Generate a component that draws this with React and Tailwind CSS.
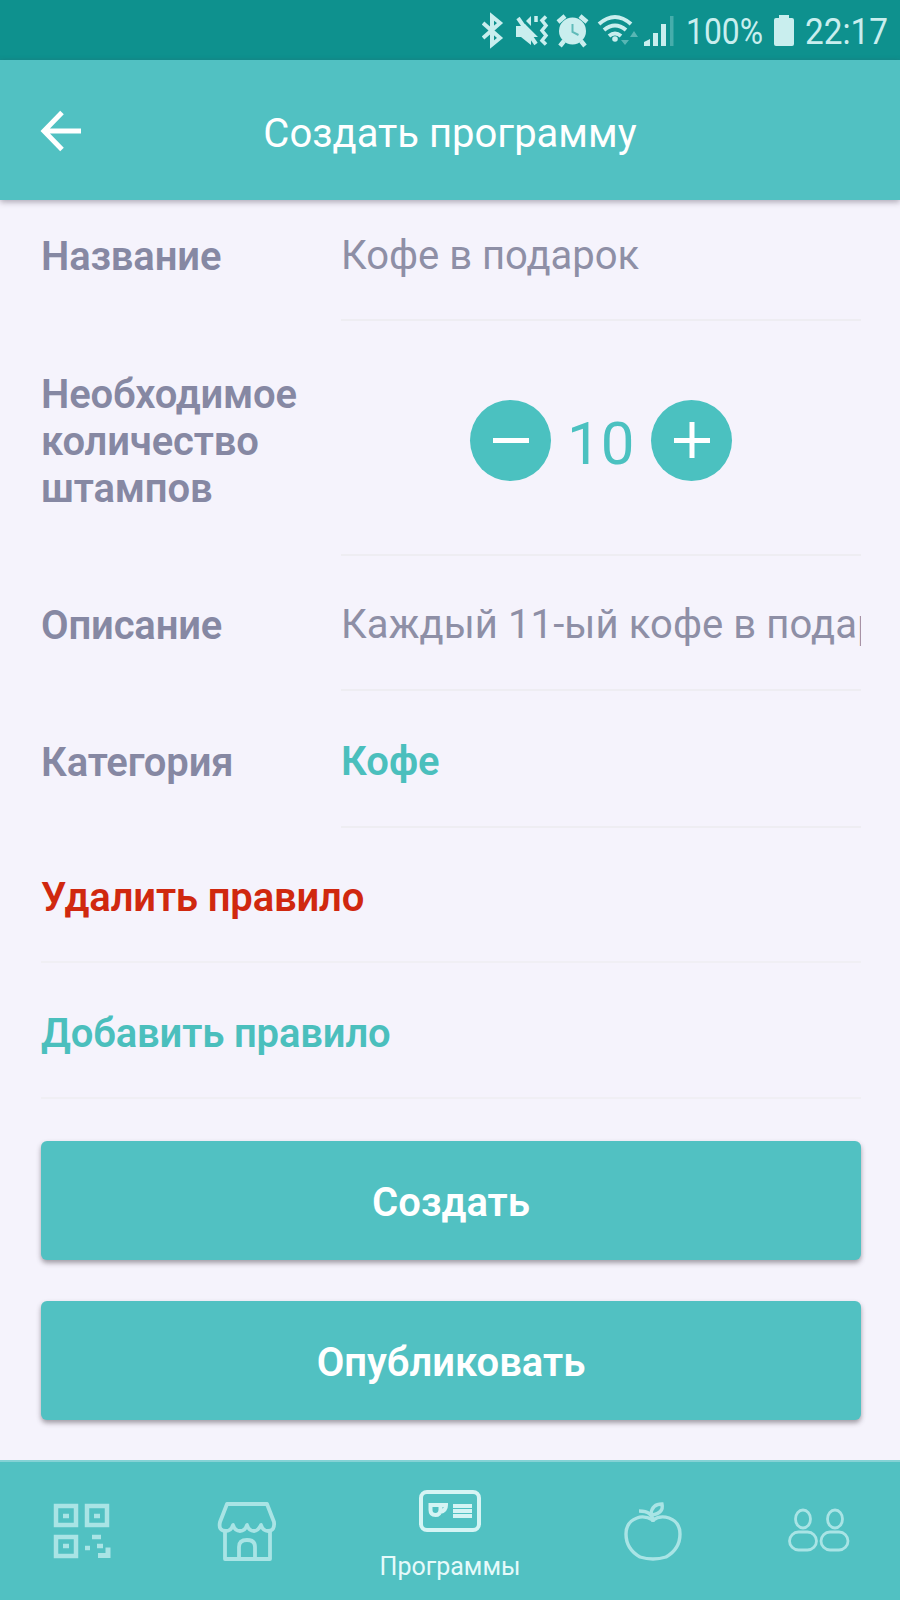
import React from "react";

function StatusBar() {
  return (
    <div className="flex h-[60px] shrink-0 items-center bg-[#0e918e] pl-[482px] text-[#c9eeee]">
      <svg className="h-[60px] w-[200px] shrink-0" viewBox="482 0 200 60" fill="none" stroke="currentColor">
        <path d="M483 23 L500 38 L492 44.500 V16.500 L500 23 L483 38" strokeWidth="4" />
        <path d="M516 26 h5 l4-2 13 13 v0 l-7 0 v8 l-10-8 h-5z" fill="currentColor" stroke="none" />
        <path d="M526 21 l5-5 v10z" fill="currentColor" stroke="none" />
        <path d="M518 18 L536 44" strokeWidth="4" />
        <path d="M546 16.500 l-4 4 4 5 -4 5 4 5 -4 5 4 4 M536 16 v6" strokeWidth="3.500" />
        <circle cx="572.500" cy="31" r="13.500" fill="currentColor" stroke="none" />
        <path d="M558 22 l7-6 M587 22 l-7-6 M564 41 l-4 5 M581 41 l4 5" strokeWidth="4.500" />
        <path d="M572.500 24 v8 l6 3" stroke="#5fbbb9" strokeWidth="2" />
        <path d="M599 24 q16-14 32 0 M604 30 q11-9 22 0 M609 36 q6-5 12 0" strokeWidth="4" />
        <circle cx="615" cy="39" r="2.800" fill="currentColor" stroke="none" />
        <path d="M621 40 l4 5 4-5z M630 37 l4-6 4 6z" fill="currentColor" stroke="none" opacity=".4" />
        <path d="M644 46 v-4 l6-3 v7z M653 46 v-13 h5 v13z M661 46 v-22 h5 v22z" fill="currentColor" stroke="none" />
        <path d="M670 46 v-30 h3.500 v30z" fill="currentColor" stroke="none" opacity=".3" />
      </svg>
      <div className="ml-[4px] w-[88px] whitespace-nowrap text-[37px] leading-[60px]"><div className="w-max origin-left scale-x-[0.86] pt-[3px]">100%</div></div>
      <svg className="h-[60px] w-[20px] shrink-0" viewBox="0 0 20 60" fill="currentColor"><path d="M0 20 q0-2 2-2 h3 v-3 h10 v3 h3 q2 0 2 2 v24 q0 2-2 2 h-16 q-2 0-2-2z" /></svg>
      <div className="ml-[11px] whitespace-nowrap text-[37px] leading-[60px]"><div className="w-max origin-left scale-x-[0.9] pt-[3px]">22:17</div></div>
    </div>
  );
}

function Header() {
  return (
    <header className="z-10 grid h-[140px] shrink-0 grid-cols-[260px_1fr_260px] items-center bg-[#51c1c2] shadow-[0_2px_6px_rgba(60,50,70,0.4)]">
      <button className="flex pt-px pl-[40px]" aria-label="Назад">
        <svg className="h-[42px] w-[42px]" viewBox="0 0 42 42" fill="none" stroke="#fff" strokeWidth="5">
          <path d="M22 2.500 L4 21 L22 39.500 M3 21 H41" />
        </svg>
      </button>
      <h1 className="whitespace-nowrap pt-[8px] text-center text-[40px] text-white">Создать программу</h1>
    </header>
  );
}

function Row({ label, height, pad, children }) {
  return (
    <div className={"flex " + height}>
      <div className={"flex w-[300px] shrink-0 items-center text-[40px] leading-[47px] font-semibold tracking-[-0.15px] text-[#8688a3] " + pad}>{label}</div>
      <div className={"flex min-w-0 flex-1 items-center border-b-2 border-[#eeedf2] text-[40px] leading-[47px] " + pad}>{children}</div>
    </div>
  );
}

function RoundButton({ d, label }) {
  return (
    <button aria-label={label} className="flex size-[81px] items-center justify-center rounded-full bg-[#4bc1c0]">
      <svg className="size-[40px]" viewBox="0 0 40 40" stroke="#fff" strokeWidth="5"><path d={d} /></svg>
    </button>
  );
}

function Action({ children }) {
  return (
    <button className="h-[119px] w-full rounded-[6px] bg-[#51c1c2] pt-[5px] text-center text-[40px] font-semibold text-white shadow-[0_3px_5px_rgba(60,50,60,0.45)]">{children}</button>
  );
}

function TabBar() {
  return (
    <nav className="mt-auto flex h-[140px] shrink-0 border-t-2 border-[#84d2d5] bg-[#51c1c2] text-[#a9e4e5]">
      <div className="flex w-[163px] justify-center">
        <svg className="mt-[40px] h-[58px] w-[60px]" viewBox="0 0 60 58" fill="none" stroke="currentColor" strokeWidth="4.500">
          <path d="M4 4 h20 v19 h-20z M35 4 h20 v19 h-20z M4 35 h20 v19 h-20z" />
          <path d="M11 14 h6 M42 14 h6 M11 44 h6 M33 46 h5 M40 35 h9 M45 44 h6" strokeWidth="4.500" />
          <path d="M46 53.500 h10 v-8" strokeWidth="5" />
        </svg>
      </div>
      <div className="flex w-[168px] justify-center">
        <svg className="mt-[38px] h-[62px] w-[60px]" viewBox="0 0 60 62" fill="none" stroke="currentColor" strokeWidth="3.800" strokeLinejoin="round">
          <path d="M10 4 H50 L57 22 Q58 31 51 31 Q46 31 44 25 Q41 31 37 31 Q32 31 30 25 Q28 31 23 31 Q18 31 16 25 Q14 31 9 31 Q1 31 3 22z" />
          <path d="M8 31 V59 H53 V31 M22 59 V47 Q22 40 30 40 Q38 40 38 47 V59" />
        </svg>
      </div>
      <div className="flex w-[238px] flex-col items-center text-white">
        <svg className="mt-[28px] h-[42px] w-[62px]" viewBox="0 0 62 42" fill="none" stroke="#d5f4f4">
          <rect x="2" y="2" width="58" height="38" rx="6" strokeWidth="4" />
          <path d="M11.500 15 H21.500 V20 Q21 25 16.500 25 Q11.500 25 11.500 20z M21 15 H27 Q27 21 21 22" strokeWidth="4" />
          <path d="M34 16 H53 M34 21 H53 M34 26 H53" strokeWidth="3.800" />
        </svg>
        <span className="mt-[20px] text-[25px] leading-[30px] text-[#e6fafa]">Программы</span>
      </div>
      <div className="flex w-[168px] justify-center">
        <svg className="mt-[38px] h-[62px] w-[60px]" viewBox="0 0 60 62" fill="none" stroke="currentColor" strokeWidth="3.400">
          <path d="M30 20 Q21 15 14 18 Q3 22 3 34 Q3 49 17 57 Q30 61 43 57 Q57 49 57 34 Q57 22 46 18 Q37 15 30 20z" />
          <path d="M30 22 Q30 11 16 11 M28 14 Q29 4 39 4 Q41 13 29 15" />
        </svg>
      </div>
      <div className="flex flex-1 justify-center">
        <svg className="mt-[45px] h-[46px] w-[62px]" viewBox="0 0 62 46" fill="none" stroke="currentColor" strokeWidth="2.800">
          <ellipse cx="15" cy="12" rx="7.500" ry="9" /><ellipse cx="47" cy="12" rx="7.500" ry="9" />
          <rect x="1.500" y="25" width="27" height="18" rx="9" /><rect x="33" y="25" width="27" height="18" rx="9" />
        </svg>
      </div>
    </nav>
  );
}

export default function App() {
  return (
    <div className="flex h-[1600px] w-[900px] flex-col overflow-hidden bg-[#f5f3fc] font-['Roboto',sans-serif]">
      <StatusBar />
      <Header />
      <main className="flex flex-col pr-[39px] pl-[41px]">
        <Row label="Название" height="h-[121px]" pad="pb-[8px]"><span className="text-[#8e8fa6]">Кофе в подарок</span></Row>
        <Row label={<span>Необходимое количество штампов</span>} height="h-[235px]" pad="pt-[5px]">
          <div className="flex w-full items-center justify-center gap-[16px]">
            <RoundButton label="Меньше" d="M2 20.500 H38" />
            <span className="w-[68px] pt-[6px] pr-[2px] text-center text-[60px] text-[#4bc1c0]">10</span>
            <RoundButton label="Больше" d="M2 20.500 H38 M20 2 V38" />
          </div>
        </Row>
        <Row label="Описание" height="h-[135px]" pad="pt-[4px]"><span className="overflow-hidden whitespace-nowrap tracking-[0.1px] text-[#8e8fa6]">Каждый 11-ый кофе в подарок</span></Row>
        <Row label="Категория" height="h-[137px]" pad="pt-[5px]"><span className="font-semibold text-[#4bbfbd]">Кофе</span></Row>
        <button className="h-[135px] border-b-2 border-[#f0eff4] pt-[6px] text-left text-[40px] font-semibold tracking-[-0.15px] text-[#d0280f]">Удалить правило</button>
        <button className="h-[136px] border-b-2 border-[#f0eff4] pt-[8px] text-left text-[40px] font-semibold tracking-[-0.15px] text-[#4bbfbd]">Добавить правило</button>
        <div className="mt-[42px] flex flex-col gap-[41px]">
          <Action>Создать</Action>
          <Action>Опубликовать</Action>
        </div>
      </main>
      <TabBar />
    </div>
  );
}
